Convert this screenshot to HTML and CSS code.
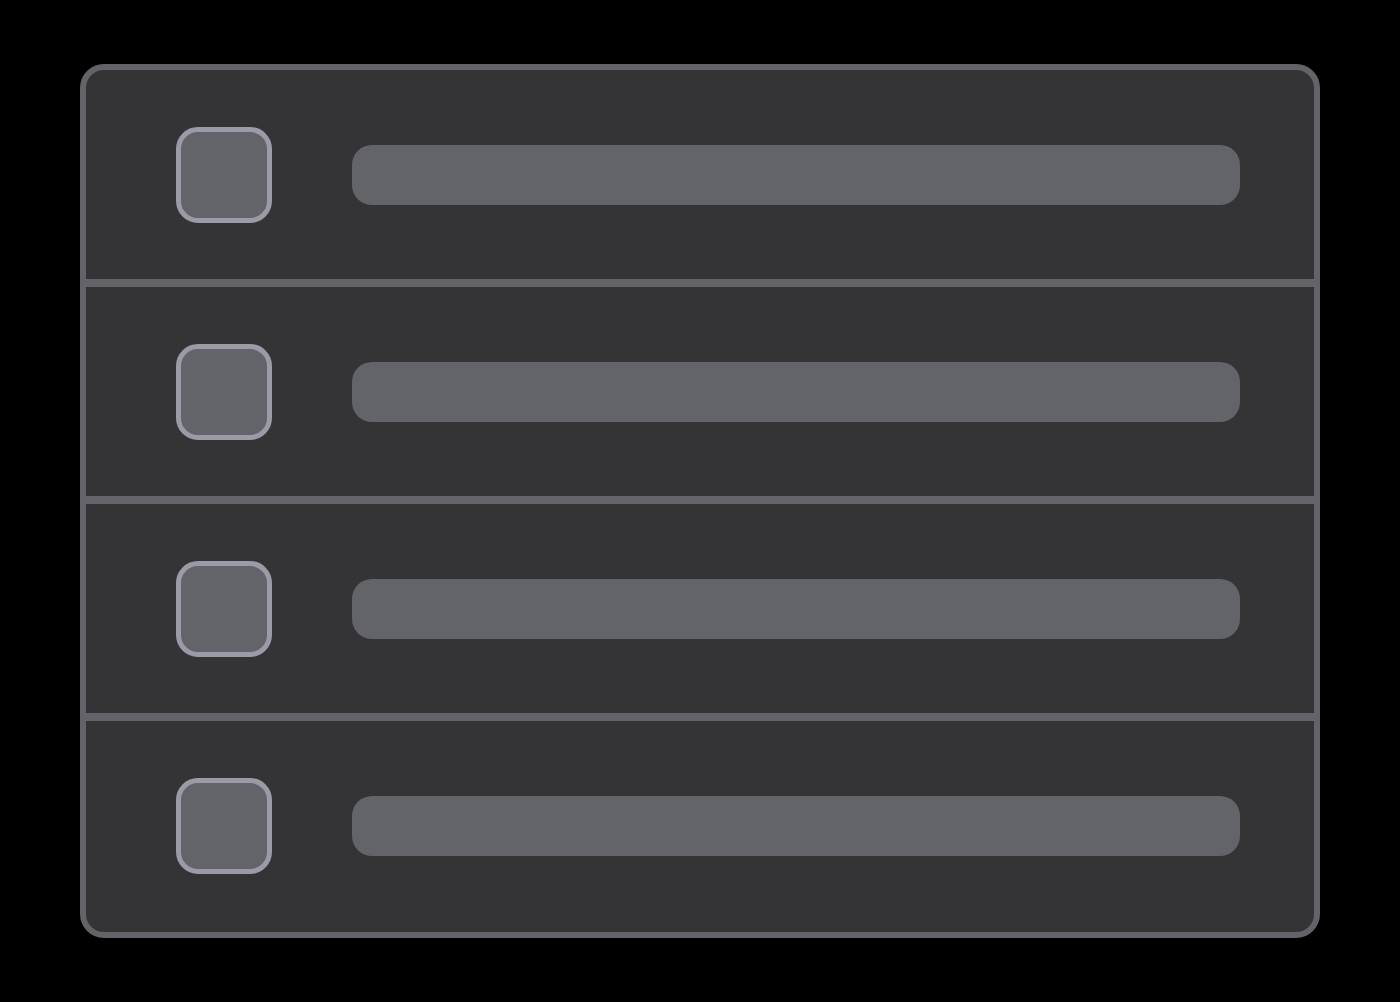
FILE: index.html
```html
<!DOCTYPE html>
<html>
<head>
<meta charset="utf-8">
<link rel="stylesheet" href="styles.css">
</head>
<body>
<div class="card">
  <div class="row"><div class="check"></div><div class="bar"></div></div>
  <div class="row"><div class="check"></div><div class="bar"></div></div>
  <div class="row"><div class="check"></div><div class="bar"></div></div>
  <div class="row"><div class="check"></div><div class="bar"></div></div>
</div>
</body>
</html>
```
FILE: styles.css
```css
html, body {
  margin: 0;
  padding: 0;
  background: #000;
  width: 1400px;
  height: 1002px;
  overflow: hidden;
  font-family: "Liberation Sans", sans-serif;
}
body {
  padding-top: 64px;
  box-sizing: border-box;
}
.card {
  margin-left: 80px;
  width: 1240px;
  height: 874px;
  box-sizing: border-box;
  border: 6px solid #636369;
  border-radius: 24px;
  background: #343436;
  display: flex;
  flex-direction: column;
  overflow: hidden;
}
.row {
  height: 209px;
  flex: none;
  display: flex;
  align-items: center;
  padding-left: 90px;
  padding-right: 74px;
  gap: 80px;
}
.row + .row {
  border-top: 8px solid #636369;
}
.check {
  width: 96px;
  height: 96px;
  box-sizing: border-box;
  border: 5px solid #9b9ba8;
  border-radius: 22px;
  background: #636469;
  flex: none;
}
.bar {
  flex: 1;
  height: 60px;
  border-radius: 20px;
  background: #636469;
}
```
